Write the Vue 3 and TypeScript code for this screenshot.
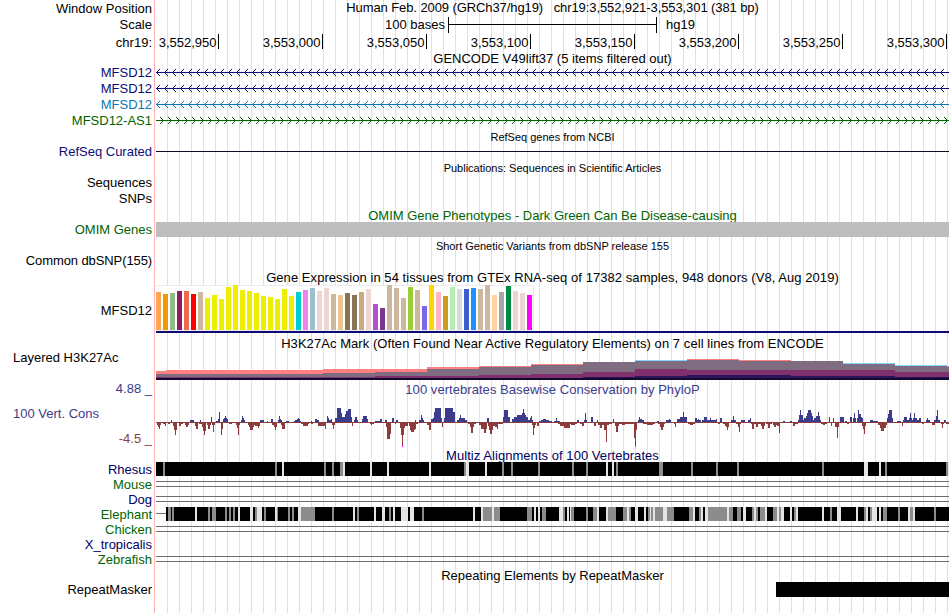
<template>
  <div class="browser">
    <div class="row position">
      <div class="label">Window Position</div>
      <div class="title">Human Feb. 2009 (GRCh37/hg19) &nbsp; chr19:3,552,921-3,553,301 (381 bp)</div>
    </div>

    <div class="row scale">
      <div class="label">Scale</div>
      <svg class="track" width="793" height="17" viewBox="156 0 793 17">
        <text x="445" y="12" text-anchor="end">100 bases</text>
        <path d="M448 0h1v16h-1zM656 0h1v16h-1zM448 7h208v1h-208z" />
        <text x="666" y="12">hg19</text>
      </svg>
    </div>

    <div class="row ruler">
      <div class="label">chr19:</div>
      <svg class="track" width="793" height="17" viewBox="156 0 793 17">
        <g v-for="tick in ticks" :key="tick.x">
          <text :x="tick.x - 1.5" y="13" text-anchor="end">{{ tick.text }}</text>
          <rect :x="tick.x" y="0" width="1" height="15" />
        </g>
      </svg>
    </div>

    <div class="row gencode-title">
      <div class="label"></div>
      <div class="title">GENCODE V49lift37 (5 items filtered out)</div>
    </div>

    <div v-for="(gene, i) in genes" :key="i" class="row gene" :class="gene.kind">
      <div class="label">{{ gene.name }}</div>
      <svg class="track" width="793" height="16" viewBox="156 0 793 16">
        <rect x="156" y="8" width="793" height="1" />
        <path class="arrows" :d="gene.reverse ? leftArrows : rightArrows" />
      </svg>
    </div>

    <div class="row refseq-title">
      <div class="label"></div>
      <div class="title small">RefSeq genes from NCBI</div>
    </div>
    <div class="row refseq">
      <div class="label navy">RefSeq Curated</div>
      <svg class="track" width="793" height="16" viewBox="156 0 793 16">
        <rect x="156" y="7" width="793" height="1" />
      </svg>
    </div>

    <div class="row pubs-title">
      <div class="label"></div>
      <div class="title small">Publications: Sequences in Scientific Articles</div>
    </div>
    <div class="row sequences">
      <div class="label">Sequences</div>
    </div>
    <div class="row snps">
      <div class="label">SNPs</div>
    </div>

    <div class="row omim-title">
      <div class="label"></div>
      <div class="title green">OMIM Gene Phenotypes - Dark Green Can Be Disease-causing</div>
    </div>
    <div class="row">
      <div class="label green">OMIM Genes</div>
      <div class="omim-bar"></div>
    </div>

    <div class="row dbsnp-title">
      <div class="label"></div>
      <div class="title small">Short Genetic Variants from dbSNP release 155</div>
    </div>
    <div class="row">
      <div class="label common">Common dbSNP(155)</div>
    </div>

    <div class="row gtex-title">
      <div class="label"></div>
      <div class="title">Gene Expression in 54 tissues from GTEx RNA-seq of 17382 samples, 948 donors (V8, Aug 2019)</div>
    </div>
    <div class="row gtex">
      <div class="label">MFSD12</div>
      <svg class="track" width="793" height="48" viewBox="156 0 793 48">
        <rect class="gtex-frame" x="156" y="0" width="378" height="46" />
        <rect class="gtex-paper" x="156" y="1" width="377" height="44" />
        <rect
          v-for="(t, i) in tissues"
          :key="i"
          :x="156 + i * 7"
          :y="45 - t[0]"
          width="5"
          :height="t[0]"
          :fill="t[1]"
        />
        <rect class="gene-model" x="156" y="46" width="793" height="2" />
      </svg>
    </div>

    <div class="row h3k-title">
      <div class="label"></div>
      <div class="title">H3K27Ac Mark (Often Found Near Active Regulatory Elements) on 7 cell lines from ENCODE</div>
    </div>
    <div class="row h3k">
      <div class="label left">Layered H3K27Ac</div>
      <svg class="track" width="793" height="30" viewBox="156 350 793 30">
        <path v-for="layer in layers" :key="layer.color" :d="stepPath(layer.tops)" :fill="layer.color" />
      </svg>
    </div>

    <div class="row phylop-title">
      <div class="label blue">4.88 _</div>
      <div class="title blue">100 vertebrates Basewise Conservation by PhyloP</div>
    </div>
    <div class="row phylop">
      <div class="label">
        <div class="cons-name blue">100 Vert. Cons</div>
        <div class="cons-min red">-4.5 _</div>
      </div>
      <svg class="track" width="793" height="50" viewBox="156 397 793 50">
        <rect class="neg" x="156" y="422" width="793" height="1" />
        <path class="pos" :d="positive" />
        <path class="neg" :d="negative" />
        <path class="clip" d="M402 445h1v2h-1zM635 445h1v2h-1z" />
      </svg>
    </div>

    <div class="row multiz-title">
      <div class="label"></div>
      <div class="title darkblue">Multiz Alignments of 100 Vertebrates</div>
    </div>
    <div v-for="sp in species" :key="sp.name" class="row">
      <div class="label" :class="sp.tone">{{ sp.name }}</div>
      <svg class="track" width="793" height="15" viewBox="156 0 793 15">
        <path v-if="sp.gap" class="gap" d="M156 4h793v1h-793zM156 9h793v1h-793z" />
        <template v-if="sp.start">
          <rect class="gap" x="156" y="6" :width="sp.start - 156" height="1" />
          <rect :x="sp.start" y="0" :width="949 - sp.start" height="14" />
          <path class="mid" :d="stripes(sp.mid)" />
          <path class="light" :d="stripes(sp.light)" />
        </template>
      </svg>
    </div>

    <div class="row repeat-title">
      <div class="label"></div>
      <div class="title">Repeating Elements by RepeatMasker</div>
    </div>
    <div class="row">
      <div class="label">RepeatMasker</div>
      <svg class="track" width="793" height="15" viewBox="156 0 793 15">
        <rect x="776" y="0" width="173" height="15" />
      </svg>
    </div>
  </div>
</template>

<script setup lang="ts">
interface Species {
  name: string;
  tone: string;
  gap?: boolean;
  start?: number;
  mid?: string;
  light?: string;
}

const ticks = Array.from({ length: 8 }, (_, i) => ({
  x: 218 + i * 104,
  text: (3552950 + i * 50).toLocaleString('en-US')
}));

const genes = [
  { name: 'MFSD12', kind: 'coding', reverse: true },
  { name: 'MFSD12', kind: 'coding', reverse: true },
  { name: 'MFSD12', kind: 'alt', reverse: true },
  { name: 'MFSD12-AS1', kind: 'antisense', reverse: false }
];

let leftArrows = '';
let rightArrows = '';
for (let x = 156; x < 949; x += 8) {
  leftArrows += `M${x + 4} 5L${x + 0.5} 8.5L${x + 4} 12`;
  rightArrows += `M${x + 4} 5L${x + 7.5} 8.5L${x + 4} 12`;
}

// [bar height, tissue color]
const yellow = '#eeee00';
const tan = '#cdb79e';
const rose = '#eed5d2';
const tissues: [number, string][] = [
  [38, '#ffa54f'], [36, '#ee9a00'], [37, '#8fbc8f'], [39, '#8b1c62'], [39, '#ee6a50'], [36, '#ff0000'],
  [38, tan], [32, yellow], [35, yellow], [31, yellow], [43, yellow], [45, yellow], [40, yellow],
  [39, yellow], [37, yellow], [34, yellow], [33, yellow], [31, yellow], [41, yellow], [34, yellow],
  [38, '#00cdcd'], [40, '#ee82ee'], [42, '#9ac0cd'], [39, rose], [42, rose], [36, tan], [35, '#eec591'],
  [37, '#8b7355'], [35, '#8b7355'], [38, '#cdaa7d'], [41, rose], [26, '#b452cd'], [22, '#7a378b'],
  [45, tan], [42, tan], [32, tan], [43, '#9acd32'], [40, tan], [24, '#7a67ee'], [45, '#ffd700'],
  [38, '#ffb6c1'], [34, '#cd9b1d'], [43, '#b4eeb4'], [41, '#d9d9d9'], [41, '#3a5fcd'], [42, '#1e90ff'],
  [41, tan], [45, tan], [35, '#ffd39b'], [38, '#a6a6a6'], [44, '#008b45'], [39, rose], [37, rose],
  [35, '#ff00ff']
];

// Each layer is a list of [x, top] steps, filled down to the baseline
const layers: { color: string; tops: [number, number][] }[] = [
  { color: '#80d4ff', tops: [[156, 380], [635, 360], [687, 380], [843, 363], [895, 365], [947, 380]] },
  {
    color: '#ff8080',
    tops: [[156, 371], [166, 370], [323, 369], [427, 367], [479, 366], [531, 364], [583, 362], [635, 361],
      [687, 359], [739, 360], [791, 361], [843, 364], [895, 366]]
  },
  {
    color: '#806c80',
    tops: [[156, 374], [323, 373], [375, 372], [427, 369], [479, 367], [531, 365], [583, 362], [635, 361],
      [687, 360], [739, 361], [843, 364], [895, 366], [947, 367]]
  },
  {
    color: '#80306c',
    tops: [[156, 377], [375, 376], [479, 375], [531, 374], [583, 372], [635, 369], [687, 370], [895, 372]]
  },
  { color: '#2c145c', tops: [[156, 378], [583, 377], [635, 376], [687, 375], [791, 376], [895, 377]] },
  { color: '#14082c', tops: [[156, 378]] }
];

function stepPath(tops: [number, number][]) {
  let d = 'M156 380';
  tops.forEach(([x, y]) => {
    d += `H${x}V${y}`;
  });
  return d + 'H949V380Z';
}

// x,width,height triples relative to the zero line
const gains =
  '171,1,2 190,4,2 200,1,2 211,1,5 216,2,1 218,2,3 219,1,10 223,5,3 224,3,4 225,1,6 241,4,2 242,2,4 242,1,6 ' +
  '260,4,2 267,1,1 271,2,3 278,4,2 279,2,3 279,1,6 286,3,1 294,7,1 295,5,2 297,3,3 298,1,4 311,1,1 315,2,3 317,2,2 ' +
  '327,2,4 327,1,6 329,3,2 331,1,3 335,17,4 337,4,14 341,1,9 342,10,5 345,2,8 346,5,11 348,3,13 354,4,2 355,2,5 ' +
  '362,6,3 363,4,6 365,1,5 375,6,1 380,2,3 385,2,2 392,2,4 396,2,2 415,1,2 419,5,2 421,1,7 421,2,4 ' +
  '431,11,3 433,9,4 434,7,10 435,6,14 444,11,4 445,10,10 445,8,14 446,5,13 457,10,2 459,6,4 460,1,7 ' +
  '487,2,4 503,7,5 504,4,12 507,1,9 508,2,5 512,16,3 514,14,5 517,9,7 522,3,9 523,1,13 528,5,2 530,2,4 531,1,6 ' +
  '539,13,1 541,8,2 543,3,3 554,6,1 556,1,4 577,2,2 584,3,2 585,1,9 591,2,5 597,1,2 613,1,3 638,6,2 639,3,3 639,1,5 ' +
  '657,2,1 666,5,2 669,1,3 677,6,3 680,3,5 682,5,5 683,1,10 695,6,2 695,2,4 698,1,3 702,14,2 704,3,5 706,1,4 ' +
  '710,1,4 716,1,3 720,2,4 731,5,2 733,1,6 741,4,2 748,3,2 750,1,4 783,2,1 790,2,1 798,23,2 799,4,7 800,1,12 ' +
  '804,3,4 806,7,6 807,5,9 808,3,12 814,6,4 816,4,6 818,1,10 829,1,5 833,1,4 840,4,5 845,2,1 850,2,5 853,3,4 ' +
  '854,1,9 857,6,4 858,3,8 858,1,12 861,1,5 870,3,2 873,5,1 887,6,4 888,4,8 889,3,12 897,4,1 903,18,2 904,3,5 ' +
  '909,3,4 910,1,9 913,4,4 914,1,9 919,2,4 926,4,2 927,1,4 934,6,2 936,2,6 937,1,12 944,2,2';

const losses =
  '157,4,3 158,2,5 159,1,7 163,3,2 165,1,4 168,2,2 173,4,4 174,3,8 175,1,13 179,4,2 179,2,4 185,4,3 186,2,5 ' +
  '195,3,4 196,2,7 199,3,2 202,4,5 203,3,9 204,1,13 207,4,3 208,2,7 212,3,3 213,1,10 221,2,7 221,1,13 ' +
  '229,3,2 236,4,3 237,2,6 238,1,13 248,10,3 249,5,5 250,3,8 255,5,4 258,1,6 272,5,3 274,3,5 275,1,8 281,4,3 ' +
  '282,3,7 301,8,2 303,5,4 311,2,2 318,8,4 320,5,3 325,1,7 332,3,3 333,1,7 352,3,1 352,1,4 358,2,1 370,4,2 371,1,3 ' +
  '386,5,5 387,3,17 389,2,12 395,1,2 400,5,6 401,3,13 402,1,23 404,4,4 409,6,4 410,5,8 411,3,10 415,1,7 ' +
  '416,2,2 427,4,3 429,2,8 442,1,5 468,8,2 470,4,5 471,2,11 479,8,3 481,6,7 484,2,11 488,7,4 489,4,8 490,2,12 ' +
  '494,9,2 495,3,5 497,1,7 532,4,3 533,2,6 533,1,13 537,2,4 558,19,2 560,10,4 564,6,6 571,4,3 580,4,2 582,2,4 ' +
  '594,2,4 598,4,3 600,2,6 602,7,3 604,3,8 606,1,20 608,4,2 615,4,4 616,2,10 618,14,2 622,3,3 632,5,2 634,3,8 ' +
  '634,2,16 635,1,23 643,12,2 647,6,3 658,7,2 660,4,5 661,2,8 674,2,2 675,1,5 688,7,2 690,3,3 718,2,2 723,6,2 ' +
  '725,4,4 726,3,5 727,1,8 736,5,2 738,2,5 739,1,10 751,12,2 752,2,7 756,2,5 761,4,4 762,2,7 766,6,2 768,2,6 ' +
  '773,4,3 774,2,5 777,3,4 779,1,11 785,3,1 793,5,2 793,2,4 821,6,2 823,2,3 831,1,4 835,4,5 837,1,16 847,2,2 ' +
  '862,4,4 863,2,7 864,1,12 878,9,3 880,6,6 881,3,9 902,1,4 922,2,2 930,6,1 932,3,3 941,3,2 942,1,6 946,3,2';

function bars(list: string, up: boolean) {
  return list
    .split(' ')
    .map((item) => {
      const [x, w, h] = item.split(',').map(Number);
      return `M${x} 422h${w}v${up ? -h : h}h${-w}z`;
    })
    .join('');
}

const positive = bars(gains, true);
const negative = bars(losses, false);

const species: Species[] = [
  {
    name: 'Rhesus',
    tone: 'darkblue',
    start: 156,
    mid: '163 275 324 332 340,3 464 502 511 538 572 586 616 659,4 691 716 737 822 885 946',
    light: '282 343 370 387 429 466,3 485 606 612 864,4 879 948,1'
  },
  { name: 'Mouse', tone: 'green', gap: true },
  { name: 'Dog', tone: 'darkblue', gap: true },
  {
    name: 'Elephant',
    tone: 'green',
    start: 166,
    mid:
      '168,3 172 208 212,4 225 229 233 255 264 277,1 288 292 301,14 332 357 389 422 483,9 494,6 527,5 542,4 ' +
      '563 571,3 586 593,4 608,8 623,4 629 648 651 655,8 667,7 689,4 699 708,19 729,4 737,4 752 756 760,5 773,4 ' +
      '779 794 830 864 870 883,4 898 910,3 934',
    light:
      '195 238 250,3 257,5 275 298,3 353 374 382,3 393 401,7 410,4 473 481 492 534 538 559,4 567 570,1 597 606 627 ' +
      '635,3 644 650,1 653 663,4 693 701 705,3 727 743,3 754 765 777 781,3 790 796 822 837,4 856 866 872,5 ' +
      '879 908 913'
  },
  { name: 'Chicken', tone: 'green', gap: true },
  { name: 'X_tropicalis', tone: 'darkblue' },
  { name: 'Zebrafish', tone: 'green', gap: true }
];

// Stripes are two pixels wide unless a width is given
function stripes(list = '') {
  return list
    .split(' ')
    .map((item) => {
      const [x, w = 2] = item.split(',').map(Number);
      return `M${x} 0h${w}v14h${-w}z`;
    })
    .join('');
}
</script>

<style>
body {
  background: #fff;
}
</style>

<style scoped>
.browser {
  width: 949px;
  height: 613px;
  overflow: hidden;
  font: 13px/15px 'Liberation Sans', Arial, sans-serif;
  color: #000;
  background:
    linear-gradient(#ffb4b4, #ffb4b4) 154px 0 / 1px 100% no-repeat,
    repeating-linear-gradient(to right, #dcdcff 0 1px, transparent 1px 12px) 167px 0 / 782px 100% no-repeat;
}

.row {
  display: flex;
  height: 15px;
}

.label {
  flex: none;
  box-sizing: border-box;
  width: 156px;
  padding-right: 4px;
  text-align: right;
  white-space: nowrap;
}

.title {
  width: 793px;
  text-align: center;
  white-space: nowrap;
}

.small {
  font-size: 11px;
}

.track {
  display: block;
  flex: none;
  shape-rendering: crispEdges;
}

/* Row heights */
.position,
.scale,
.ruler {
  height: 17px;
}

.position .label,
.ruler .label,
.gene .label {
  padding-top: 1px;
}

.position .title {
  letter-spacing: -0.09px;
}

.gencode-title {
  height: 13px;
}

.gene,
.refseq,
.refseq-title,
.omim-title,
.dbsnp-title {
  height: 16px;
}

.pubs-title {
  height: 15px;
}

.snps {
  height: 16px;
}

.snps .label,
.pubs-title .title,
.multiz-title .title,
.repeat-title .title {
  padding-top: 1px;
}

.refseq-title .title,
.dbsnp-title .title {
  padding-top: 2px;
}

.gtex-title,
.h3k-title,
.phylop-title {
  height: 17px;
}

.gtex-title .title,
.h3k-title .title {
  letter-spacing: 0.06px;
}

.phylop-title .title,
.multiz-title .title {
  letter-spacing: 0.05px;
}

.omim-title .title,
.gtex-title .title,
.phylop-title .title {
  padding-top: 2px;
}

.h3k-title .title {
  padding-top: 3px;
}

.phylop-title .label {
  padding-top: 1px;
}

.common {
  letter-spacing: -0.1px;
}

.gtex {
  height: 48px;
}

.gtex .label {
  padding-top: 18px;
}

.h3k {
  height: 30px;
}

.left {
  padding-left: 13px;
  text-align: left;
}

.phylop {
  height: 50px;
}

.cons-name {
  padding: 9px 0 10px 13px;
  text-align: left;
}

/* Colors */
.navy {
  color: #0c0c78;
}

.darkblue {
  color: #000064;
}

.green {
  color: #006400;
}

.blue {
  color: #3c3c8c;
}

.red {
  color: #8c3c3c;
}

.coding {
  color: #0c0c78;
  fill: #0c0c78;
}

.alt {
  color: #0a78b4;
  fill: #0a78b4;
}

.antisense {
  color: #006400;
  fill: #006400;
}

.arrows {
  fill: none;
  stroke: currentColor;
  stroke-width: 1;
  shape-rendering: auto;
}

.refseq rect {
  fill: #0c0c28;
}

.omim-bar {
  width: 793px;
  background: #bebebe;
}

.gtex-frame {
  fill: #ebebeb;
}

.gtex-paper {
  fill: #fff;
}

.gene-model {
  fill: #0c0c78;
}

.pos {
  fill: #3c3c8c;
}

.neg {
  fill: #8c3c3c;
}

.clip {
  fill: #ff00ff;
}

.gap {
  fill: #6e6e6e;
}

.mid {
  fill: #8c8c8c;
}

.light {
  fill: #e4e4e4;
}
</style>
